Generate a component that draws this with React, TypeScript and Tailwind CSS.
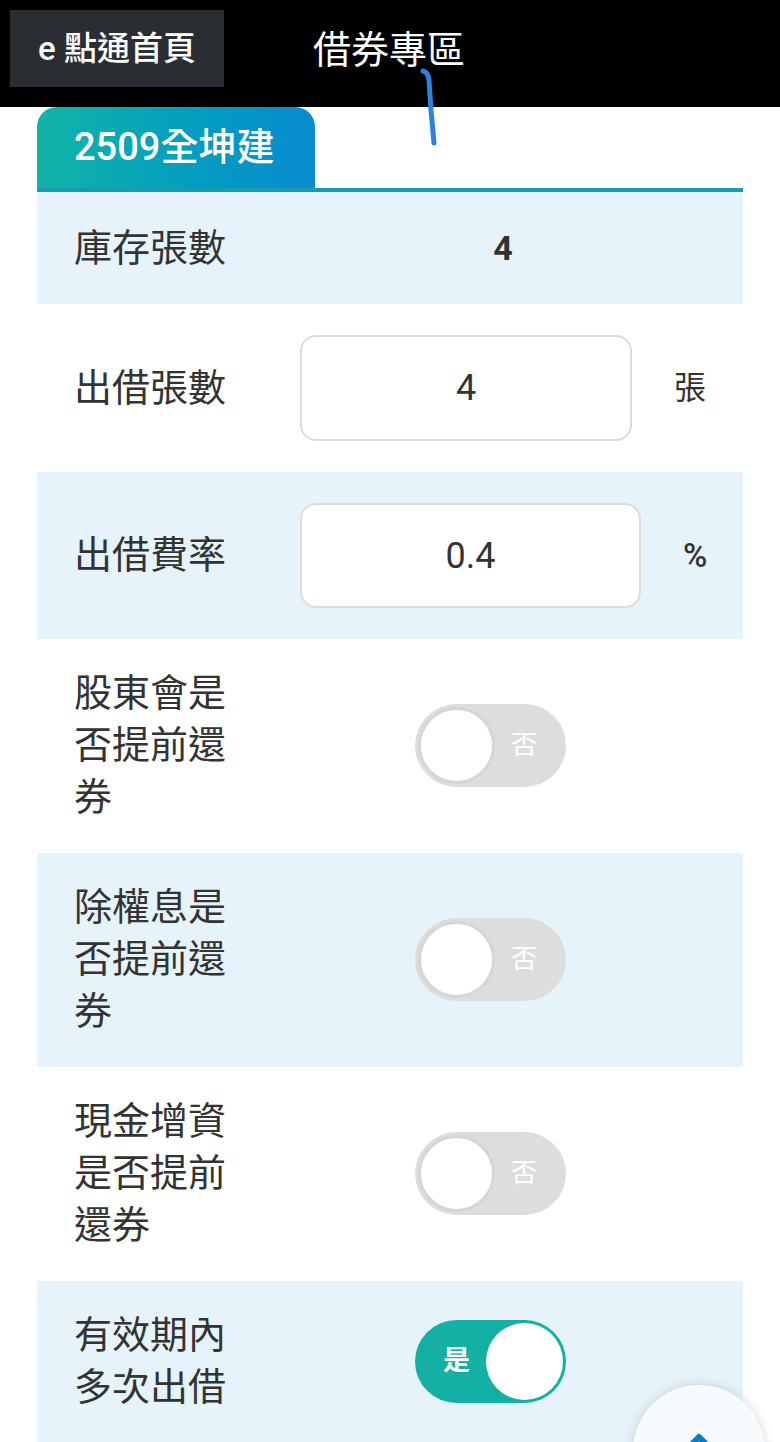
import React from "react";

const FONT = { fontFamily: 'Roboto, "Noto Sans CJK TC", "Noto Sans", sans-serif' };

function Toggle({ on }: { on: boolean }) {
  if (on) {
    return (
      <div className="relative flex h-[83px] w-[151px] items-center rounded-full bg-[#15b0a4]">
        <span className="ml-[28px] text-[27px] font-bold text-white">是</span>
        <div className="absolute right-[3px] top-[3px] h-[77px] w-[77px] rounded-full bg-white" />
      </div>
    );
  }
  return (
    <div className="relative flex h-[83px] w-[151px] items-center justify-end rounded-full bg-[#dddddd]">
      <span className="mr-[29px] text-[26px] text-white">否</span>
      <div className="absolute left-[3px] top-[3px] h-[77px] w-[77px] rounded-full border-[3px] border-[#d6d6d6] bg-white" />
    </div>
  );
}

function ToggleRow({ lines, on, blue }: { lines: string[]; on: boolean; blue: boolean }) {
  return (
    <div className={`flex items-center pb-[30px] pt-[28px] ${blue ? "bg-[#e6f3fa]" : "bg-white"}`}>
      <div className="w-[263px] pl-[37px] text-[38px] leading-[52px] text-[#333]">
        {lines.map((l, i) => (
          <div key={i}>{l}</div>
        ))}
      </div>
      <div className="ml-[115px]">
        <Toggle on={on} />
      </div>
    </div>
  );
}

export default function App() {
  return (
    <div className="relative h-[1442px] w-[780px] overflow-hidden bg-white" style={FONT}>
      {/* header */}
      <div className="flex h-[107px] items-start bg-black">
        <div className="ml-[10px] mt-[10px] flex h-[77px] w-[214px] items-center justify-center bg-[#2a2d32] text-[33px] font-medium text-white">
          e 點通首頁
        </div>
        <div className="ml-[89px] mt-[24px] text-[38px] leading-[52px] text-white">借券專區</div>
      </div>

      <div className="mx-[37px]">
        {/* tab */}
        <div className="flex h-[81px] items-end">
          <div className="flex h-[81px] w-[278px] items-center rounded-t-[20px] bg-gradient-to-r from-[#13b4a6] to-[#0a8bd0] pl-[37px] text-[38px] font-medium text-white">
            2509全坤建
          </div>
        </div>
        <div className="h-[4px] bg-[#1a9bb2]" />

        {/* row 1 */}
        <div className="flex h-[112px] items-center bg-[#e6f3fa]">
          <div className="w-[263px] pl-[37px] text-[38px] text-[#333]">庫存張數</div>
          <div className="flex-1 pr-[37px] text-center text-[34px] font-bold text-[#333]">4</div>
        </div>

        {/* row 2 */}
        <div className="flex h-[168px] items-center bg-white">
          <div className="w-[263px] pl-[37px] text-[38px] text-[#333]">出借張數</div>
          <div className="flex h-[106px] w-[332px] items-center justify-center rounded-[16px] border-2 border-[#dcdcdc] bg-white text-[36px] text-[#333]">
            4
          </div>
          <div className="ml-[42px] text-[32px] text-[#333]">張</div>
        </div>

        {/* row 3 */}
        <div className="flex h-[167px] items-center bg-[#e6f3fa]">
          <div className="w-[263px] pl-[37px] text-[38px] text-[#333]">出借費率</div>
          <div className="flex h-[105px] w-[341px] items-center justify-center rounded-[16px] border-2 border-[#dcdcdc] bg-white text-[36px] text-[#333]">
            0.4
          </div>
          <div className="ml-[42px] text-[33px] font-medium text-[#333]">%</div>
        </div>

        <ToggleRow lines={["股東會是", "否提前還", "券"]} on={false} blue={false} />
        <ToggleRow lines={["除權息是", "否提前還", "券"]} on={false} blue={true} />
        <ToggleRow lines={["現金增資", "是否提前", "還券"]} on={false} blue={false} />
        <ToggleRow lines={["有效期內", "多次出借"]} on={true} blue={true} />
      </div>

      {/* floating scroll-top button */}
      <div className="absolute left-[633px] top-[1385px] flex h-[132px] w-[132px] justify-center rounded-full bg-[#f7fbfe] shadow-[0_0_12px_rgba(0,0,0,0.15)]">
        <svg width="40" height="30" viewBox="0 0 40 30" className="mt-[42px]">
          <path d="M6 24 L20 10 L34 24" fill="none" stroke="#0a7cc2" strokeWidth="6" strokeLinecap="round" strokeLinejoin="round" />
        </svg>
      </div>

      {/* hand-drawn annotation stroke */}
      <svg className="pointer-events-none absolute left-0 top-0" width="780" height="200">
        <path
          d="M423 71 Q428 72 429 80 L431 110 L434 143"
          fill="none"
          stroke="#2f80e4"
          strokeWidth="5"
          strokeLinecap="round"
          strokeLinejoin="round"
        />
      </svg>
    </div>
  );
}
